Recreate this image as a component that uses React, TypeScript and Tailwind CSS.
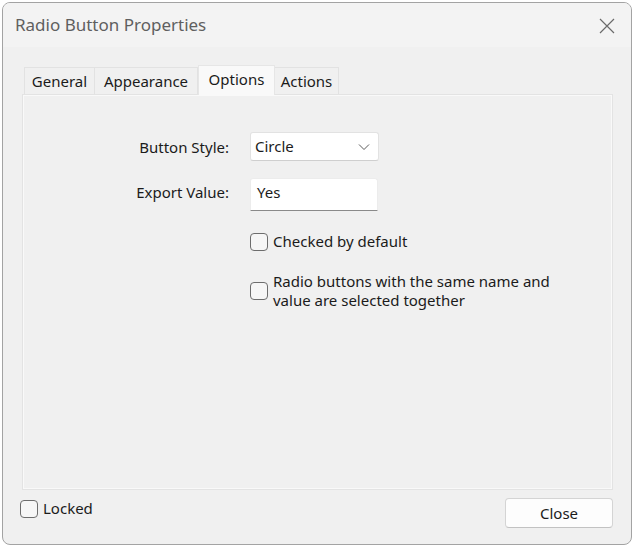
import type { ReactNode } from 'react';

const font = { fontFamily: '"Noto Sans", "Segoe UI", Arial, sans-serif' };

type Tab = { label: string; width: string; active?: boolean };

const TABS: Tab[] = [
  { label: 'General', width: 'w-[71px]' },
  { label: 'Appearance', width: 'w-[104px]' },
  { label: 'Options', width: 'w-[77px]', active: true },
  { label: 'Actions', width: 'w-[65px]' },
];

function Checkbox({ children, className = '' }: { children: ReactNode; className?: string }) {
  return (
    <label className={`flex items-center gap-[5px] ${className}`}>
      <span className="h-[18px] w-[18px] shrink-0 rounded-[4px] border border-[#6d6d6d] bg-[#f6f6f6]" />
      <span className="leading-[19px]">{children}</span>
    </label>
  );
}

function FormRow({ label, labelClass = '', children }: { label: string; labelClass?: string; children: ReactNode }) {
  return (
    <div className="flex items-center">
      <div className={`w-[206px] text-right ${labelClass}`}>{label}</div>
      <div className="ml-[21px]">{children}</div>
    </div>
  );
}

export default function App() {
  return (
    <div className="h-[547px] w-[634px] bg-white pl-[2px] pt-[2px]" style={font}>
      <div className="flex h-[543px] w-[630px] flex-col overflow-hidden rounded-lg border border-[#a3a3a3] bg-[#f0f0f0] text-[15px] text-[#1b1b1b]">
        {/* title bar */}
        <div className="flex h-[44px] shrink-0 items-center justify-between bg-[#f3f3f3] pl-[12px] pr-[16px]">
          <span className="text-[17px] text-[#5f5f5f]">Radio Button Properties</span>
          <svg width="16" height="16" viewBox="0 0 16 16" className="mt-[2px]">
            <path d="M1 1 L15 15 M15 1 L1 15" stroke="#6a6a6a" strokeWidth="1.2" fill="none" />
          </svg>
        </div>

        <div className="flex flex-1 flex-col px-[19px] pt-[18px]">
          {/* tabs */}
          <div className="flex items-end pl-[2px]">
            {TABS.map((tab) => (
              <div
                key={tab.label}
                className={
                  tab.active
                    ? `${tab.width} -mb-px z-10 flex h-[30px] items-start justify-center border border-b-0 border-[#e6e6e6] bg-[#f9f9f9] pt-[2px]`
                    : `${tab.width} flex h-[27px] items-center justify-center border border-b-0 border-[#e2e2e2] bg-[#f0f0f0] pt-[1px] -ml-px first:ml-0`
                }
              >
                {tab.label}
              </div>
            ))}
          </div>

          {/* panel */}
          <div className="flex h-[396px] w-[591px] flex-col gap-[17px] border border-[#e3e3e3] bg-[#f0f0f0] pt-[37px] shadow-[inset_1px_1px_0_#f9f9f9,inset_-1px_-1px_0_#f9f9f9]">
            <FormRow label="Button Style:" labelClass="pt-[1px]">
              <div className="flex h-[29px] w-[129px] items-center justify-between rounded-[3px] border border-[#e2e2e2] border-b-[#cfcfcf] bg-white pl-[4px] pr-[8px]">
                <span>Circle</span>
                <svg width="12" height="8" viewBox="0 0 12 8">
                  <path d="M1 1.5 L6 6.5 L11 1.5" stroke="#5a5a5a" strokeWidth="1" fill="none" />
                </svg>
              </div>
            </FormRow>
            <FormRow label="Export Value:" labelClass="pb-[4px]">
              <div className="flex h-[33px] w-[128px] items-center rounded-t-[3px] border border-[#ececec] border-b-[#8a8a8a] bg-white pb-[4px] pl-[6px]">
                Yes
              </div>
            </FormRow>
            <div className="mt-[4px] flex flex-col gap-[21px] pl-[227px]">
              <Checkbox>Checked by default</Checkbox>
              <Checkbox>
                Radio buttons with the same name and
                <br />
                value are selected together
              </Checkbox>
            </div>
          </div>

          {/* footer */}
          <div className="flex items-start justify-between pt-[8px]">
            <Checkbox className="-ml-[2px] mt-[1px]">Locked</Checkbox>
            <button
              type="button"
              className="mr-[-1px] h-[30px] w-[108px] rounded-[4px] border border-[#d4d4d4] border-b-[#c2c2c2] bg-[#fdfdfd] text-[15px] text-[#1b1b1b]"
            >
              Close
            </button>
          </div>
        </div>
      </div>
    </div>
  );
}
